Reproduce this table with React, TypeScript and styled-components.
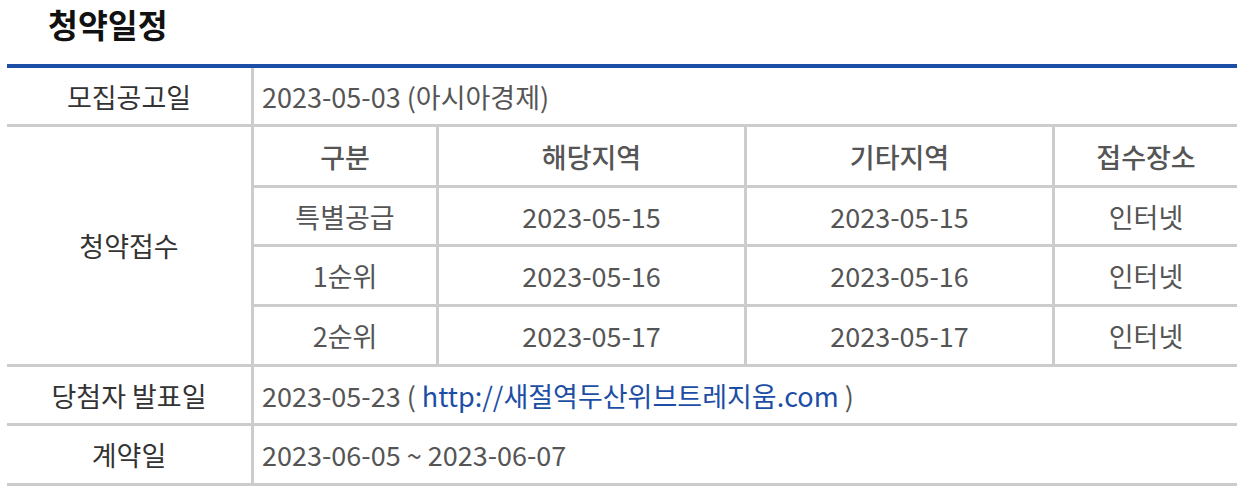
import React from "react";
import styled, { createGlobalStyle } from "styled-components";

const GlobalStyle = createGlobalStyle`
  html, body {
    margin: 0;
    padding: 0;
    background: #fff;
  }
  body {
    font-family: "Noto Sans CJK KR", "Noto Sans", sans-serif;
  }
`;

type Tone = "label" | "head" | "value";

const Page = styled.div`
  width: 1244px;
  padding: 0 7px;
  box-sizing: border-box;
`;

const Title = styled.h2`
  margin: 0;
  height: 64px;
  padding-left: 41px;
  font-size: 32.5px;
  font-weight: 700;
  line-height: 48px;
  color: #111;
`;

const Schedule = styled.div`
  display: grid;
  grid-template-columns: 244px 182px 305px 305px 182px;
  grid-template-rows: 56px 58px 56px 57px 57px 56px 57px;
  gap: 3px;
  background: #cccccc;
  border-top: 4px solid #1d4ea6;
  padding-bottom: 3px;
`;

const toneColor: Record<Tone, string> = {
  label: "#333",
  head: "#555",
  value: "#555",
};

const Cell = styled.div<{
  $tone?: Tone;
  $span?: number;
  $rows?: number;
  $left?: boolean;
}>`
  display: flex;
  align-items: center;
  justify-content: ${({ $left }) => ($left ? "flex-start" : "center")};
  padding: ${({ $left }) => ($left ? "0 0 0 8px" : "0")};
  background: #fff;
  font-size: 27px;
  font-weight: ${({ $tone }) => ($tone === "head" ? 500 : 400)};
  color: ${({ $tone = "value" }) => toneColor[$tone]};
  white-space: pre;
  grid-column: ${({ $span }) => ($span ? `span ${$span}` : "auto")};
  grid-row: ${({ $rows }) => ($rows ? `span ${$rows}` : "auto")};
`;

const Link = styled.a`
  color: #1d4ea6;
  text-decoration: none;
`;

const rounds = [
  { name: "특별공급", date: "2023-05-15" },
  { name: "1순위", date: "2023-05-16" },
  { name: "2순위", date: "2023-05-17" },
];

export default function App() {
  return (
    <Page>
      <GlobalStyle />
      <Title>청약일정</Title>
      <Schedule>
        <Cell $tone="label">모집공고일</Cell>
        <Cell $span={4} $left>
          2023-05-03 (아시아경제)
        </Cell>

        <Cell $tone="label" $rows={4}>
          청약접수
        </Cell>
        <Cell $tone="head">구분</Cell>
        <Cell $tone="head">해당지역</Cell>
        <Cell $tone="head">기타지역</Cell>
        <Cell $tone="head">접수장소</Cell>
        {rounds.map((r) => (
          <React.Fragment key={r.name}>
            <Cell>{r.name}</Cell>
            <Cell>{r.date}</Cell>
            <Cell>{r.date}</Cell>
            <Cell>인터넷</Cell>
          </React.Fragment>
        ))}

        <Cell $tone="label">당첨자 발표일</Cell>
        <Cell $span={4} $left>
          {"2023-05-23 ( "}
          <Link href="#">http://새절역두산위브트레지움.com</Link>
          {" )"}
        </Cell>

        <Cell $tone="label">계약일</Cell>
        <Cell $span={4} $left>
          2023-06-05 ~ 2023-06-07
        </Cell>
      </Schedule>
    </Page>
  );
}
